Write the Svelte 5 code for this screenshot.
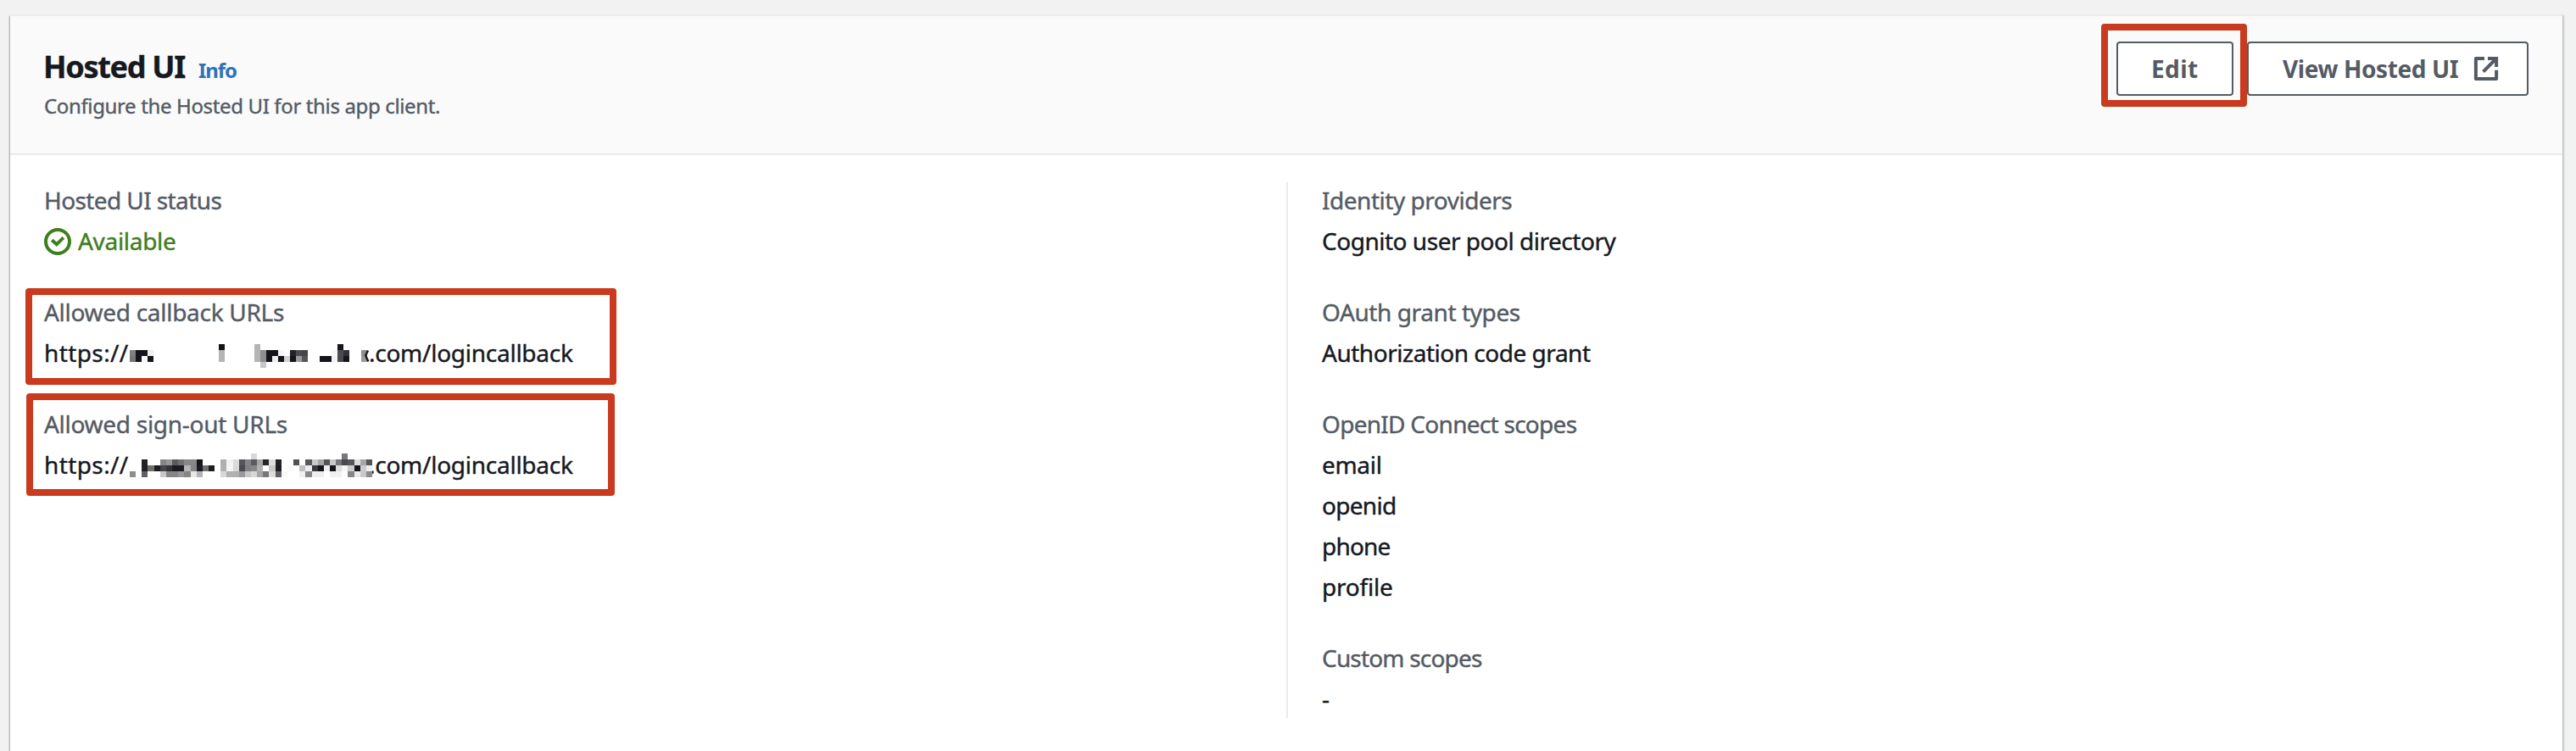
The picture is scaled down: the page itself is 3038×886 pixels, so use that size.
<script>
  const left = [
    { label: 'Allowed callback URLs', ls: -0.29, mosaic: 0, box: 'first' },
    { label: 'Allowed sign-out URLs', ls: -0.28, mosaic: 1, box: 'second' }
  ];
  const right = [
    { label: 'Identity providers', ls: -0.48, values: [['Cognito user pool directory', -0.48]] },
    { label: 'OAuth grant types', ls: -0.4, values: [['Authorization code grant', -0.48]] },
    {
      label: 'OpenID Connect scopes',
      ls: -0.72,
      values: [['email', -0.3], ['openid', -0.7], ['phone', -0.8], ['profile', -0.2]]
    },
    { label: 'Custom scopes', ls: -0.82, values: [['-', 0]] }
  ];

  // Redaction cells: column:grey level (hex), one list per row.
  const rows = [
    {
      step: 7, height: 7, top: 0,
      data: [
        '15:14 21:b4 35:16',
        '0:80 1:14 2:14 3:ee 15:b4 21:b4 22:8e 23:14 24:14 25:f6 27:22 28:4b 29:44 34:f7 35:4a 36:30 39:8e',
        '0:77 1:14 2:f8 3:14 15:b4 21:b4 22:8e 23:14 24:ee 25:14 26:d2 27:14 28:9a 29:55 32:14 33:14 34:f4 35:4a 36:14 39:9a',
        '22:c8'
      ]
    },
    {
      step: 7.15, height: 6.9, top: -3,
      data: [
        '20:d8 35:77',
        '2:20 5:85 6:97 7:5a 8:70 9:87 10:87 11:14 15:ad 16:f2 17:dc 18:55 19:83 20:5a 21:a5 22:24 23:dd 24:20 27:50 29:58 30:c8 31:a5 32:55 33:c8 34:77 35:48 36:55 37:dd 38:a5 39:55',
        '2:20 3:6e 4:1d 5:44 6:33 7:1c 8:1c 9:b5 10:83 11:1a 12:70 13:1c 15:b0 16:f5 17:d8 18:4a 19:80 20:88 21:b0 23:c8 24:1c 26:f8 28:c0 29:ee 30:38 31:14 32:ee 33:14 34:dd 35:f5 36:cc 37:14 38:cc 39:ee',
        '0:8e 2:60 5:c8 6:87 7:87 8:97 9:85 10:e8 11:b4 15:d8 16:b0 17:b0 18:99 19:c8 20:d8 21:a5 22:77 23:dd 24:60 25:f8 28:f0 29:88 30:ee 31:ee 33:f0 34:f0 36:88 37:eb 38:c8 39:8c'
      ]
    }
  ];

  const tint = (h) => {
    const n = parseInt(h, 16);
    return `rgb(${n}, ${n}, ${n < 100 ? n + 6 : n})`;
  };

  const mosaics = rows.map((m) =>
    m.data.flatMap((line, r) =>
      line.split(' ').map((c) => {
        const [col, grey] = c.split(':');
        return { x: col * m.step, y: m.top + r * m.height, w: m.step, h: m.height, fill: tint(grey) };
      })
    )
  );
</script>

<main class="panel">
  <header>
    <div class="heading">
      <div class="title"><h2>Hosted UI</h2><a class="info">Info</a></div>
      <p>Configure the Hosted UI for this app client.</p>
    </div>
    <div class="actions">
      <button class="edit">Edit<i class="mark"></i></button>
      <button class="view">
        View Hosted UI
        <svg class="external" viewBox="0 0 32 32">
          <path d="M14 3.9H3.9V28.1H28.1V17.8" stroke-linejoin="round" />
          <path d="M18 3.9H28.1V14M28 4L12.6 19.6" />
        </svg>
      </button>
    </div>
  </header>

  <div class="columns">
    <section>
      <div class="item">
        <div class="label" style:letter-spacing="-0.6px">Hosted UI status</div>
        <div class="status">
          <svg viewBox="0 0 32 32"><circle cx="16" cy="16" r="14" /><path d="M9.2 14.2L14.8 19.3L22.8 11.3" /></svg>
          <span>Available</span>
        </div>
      </div>
      {#each left as item}
        <div class="item">
          <div class="label" style:letter-spacing="{item.ls}px">{item.label}</div>
          <div class="url">
            <span class="scheme">https://</span>
            <svg class="mosaic" viewBox="0 0 282 28" shape-rendering="crispEdges">
              {#each mosaics[item.mosaic] as c}
                <rect x={c.x} y={c.y} width={c.w} height={c.h} fill={c.fill} />
              {/each}
              {#if item.mosaic === 0}
                <path d="M281 7.5L278.2 13.5L281.4 20.5" shape-rendering="auto" />
              {/if}
            </svg>
            <span class="host">.com/logincallback</span>
          </div>
          <i class="mark {item.box}"></i>
        </div>
      {/each}
    </section>
    <section class="second-column">
      {#each right as item}
        <div class="item">
          <div class="label" style:letter-spacing="{item.ls}px">{item.label}</div>
          {#each item.values as [text, ls]}
            <div class="value" style:letter-spacing="{ls}px">{text}</div>
          {/each}
        </div>
      {/each}
    </section>
  </div>
</main>

<style>
  :global(body) {
    background: #f2f2f2;
    overflow: hidden;
  }
  .panel {
    box-sizing: border-box;
    height: 869px;
    margin: 17px 16px 0 12px;
    border-top: 2px solid #eaebeb;
    background: #fff;
    box-shadow: 0 2px 2px rgba(0, 28, 36, 0.3), 1px 2px 2px 1px rgba(0, 28, 36, 0.15), -1px 2px 2px 0 rgba(0, 28, 36, 0.2);
    color: #16191f;
    font: 28px/48px "Noto Sans", sans-serif;
    -webkit-text-stroke: 0.4px currentColor;
  }
  header {
    box-sizing: border-box;
    display: flex;
    justify-content: space-between;
    height: 164px;
    padding: 30px 40px 0;
    border-bottom: 2px solid #eaebeb;
    background: #fafafa;
  }
  .heading {
    padding-top: 8px;
  }
  .title {
    display: flex;
    align-items: baseline;
    gap: 16px;
    height: 44px;
  }
  h2 {
    margin: 0 0 0 -1px;
    font-size: 36px;
    line-height: 44px;
    letter-spacing: -1.3px;
  }
  .info {
    color: #2e73b7;
    font-size: 24px;
    font-weight: 700;
    line-height: 36px;
    letter-spacing: -1px;
    -webkit-text-stroke: 0;
  }
  p {
    margin: 6px 0 0;
    color: #545b64;
    font-size: 24px;
    line-height: 36px;
    letter-spacing: -0.36px;
  }
  .actions {
    display: flex;
    gap: 16px;
  }
  button {
    position: relative;
    box-sizing: border-box;
    display: flex;
    align-items: center;
    height: 64px;
    padding: 0 32px 0 40px;
    border: 2px solid #545b64;
    border-radius: 4px;
    background: #fff;
    color: #545b64;
    font: 700 28px/48px "Noto Sans", sans-serif;
    -webkit-text-stroke: 0;
  }
  .edit {
    width: 138px;
    padding-left: 39px;
    letter-spacing: 0.4px;
  }
  .view {
    width: 332px;
    letter-spacing: -0.4px;
    white-space: nowrap;
  }
  .external {
    width: 32px;
    height: 32px;
    margin-left: auto;
    fill: none;
    stroke: #545b64;
    stroke-width: 4;
  }
  .columns {
    display: grid;
    grid-template-columns: 1465px 1fr;
    padding: 29px 40px 0;
  }
  section {
    display: flex;
    flex-direction: column;
    gap: 36px;
  }
  .second-column {
    height: 632px;
    margin-top: 3px;
    padding-left: 40px;
    border-left: 2px solid #eaebeb;
  }
  .second-column .item:first-child {
    margin-top: -3px;
  }
  .item {
    position: relative;
  }
  .label {
    color: #545b64;
  }
  .status {
    display: flex;
    align-items: center;
    gap: 8px;
    color: #3f7e1f;
    letter-spacing: -0.3px;
  }
  .status svg {
    width: 32px;
    height: 32px;
    margin-top: 2px;
    fill: none;
    stroke: currentColor;
    stroke-width: 4;
  }
  .url {
    display: flex;
    height: 48px;
  }
  .scheme {
    width: 101px;
    letter-spacing: 0.4px;
  }
  .mosaic {
    position: relative;
    width: 282px;
    height: 28px;
    margin-top: 14px;
    overflow: visible;
  }
  .mosaic path {
    fill: none;
    stroke: #16191f;
    stroke-width: 2.4;
  }
  .host {
    letter-spacing: -0.26px;
  }
  .mark {
    position: absolute;
    box-sizing: border-box;
    border: 8px solid #c93a1e;
    border-radius: 4px;
    pointer-events: none;
  }
  .edit .mark {
    top: -23px;
    left: -20px;
    width: 172px;
    height: 98px;
  }
  .first {
    top: -4px;
    left: -22px;
    width: 697px;
    height: 114px;
  }
  .second {
    top: -12px;
    left: -21px;
    width: 694px;
    height: 121px;
  }
</style>
